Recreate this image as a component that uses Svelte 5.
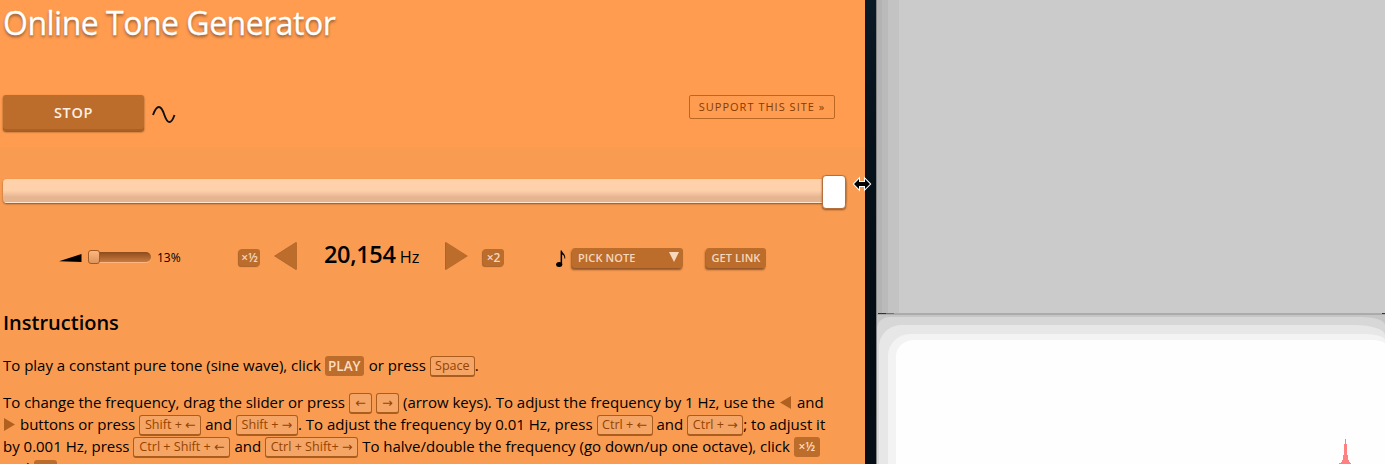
<script>
  const volume = 13;
  const frequency = '20,154';
</script>

<div class="desktop">
  <main>
    <h1>Online Tone Generator</h1>
    <div class="top">
      <button class="stop">STOP</button>
      <svg class="wave" width="24" height="20" viewBox="0 0 24 20"><path d="M1 10C5 -1 9 0 12.2 9.5S19 20 22.5 10" /></svg>
      <a class="support">SUPPORT THIS SITE »</a>
    </div>
    <div class="slider"><span class="thumb"></span></div>
    <div class="controls">
      <svg class="volicon" width="23" height="8"><path d="M0 7.2L22.5 0V8Z" /></svg>
      <div class="volume"><span></span></div>
      <span class="percent">{volume}%</span>
      <button class="mini half">×½</button>
      <svg class="tri left" width="22" height="28"><path d="M0 14L22 0V28Z" /></svg>
      <div class="freq"><b>{frequency}</b> Hz</div>
      <svg class="tri right" width="22" height="28"><path d="M22 14L0 0V28Z" /></svg>
      <button class="mini double">×2</button>
      <svg class="note" width="11" height="18" viewBox="0 0 11 18"><ellipse cx="3.2" cy="14.5" rx="3.1" ry="2.5" /><path d="M4.6 0.5H5.8C6 3 9.8 4 9.2 8.6H8.3C8.6 6.2 7.5 5 6.1 4.6V14.5H4.6Z" /></svg>
      <button class="pick">PICK NOTE<svg width="10" height="10"><path d="M0 0H10L5 10Z" /></svg></button>
      <button class="link">GET LINK</button>
    </div>
    <h2>Instructions</h2>
    <p class="first"><span>To play a constant pure tone (sine wave), click</span><span class="tag play">PLAY</span><span>or press</span><kbd class="space">Space</kbd>.</p>
    <div class="para">
      <p><span>To change the frequency, drag the slider or press</span><kbd style:width="23px" style:margin="0 4px">←</kbd><kbd style:width="23px" style:margin-right="4px">→</kbd><span>(arrow keys). To adjust the frequency by 1 Hz, use the</span><svg class="inline" width="11" height="13"><path d="M0 6.5L11 0V13Z" /></svg><span>and</span></p>
      <p><svg class="inline begin" width="11" height="13"><path d="M11 6.5L0 0V13Z" /></svg><span>buttons or press</span><kbd style:width="62px" style:margin="0 4px">Shift + ←</kbd><span>and</span><kbd style:width="62px" style:margin-left="4px">Shift + →</kbd><span>. To adjust the frequency by 0.01 Hz, press</span><kbd style:width="56px" style:margin="0 4px">Ctrl + ←</kbd><span>and</span><kbd style:width="56px" style:margin-left="4px">Ctrl + →</kbd><span>; to adjust it</span></p>
      <p><span>by 0.001 Hz, press</span><kbd style:width="97px" style:margin="0 4px">Ctrl + Shift + ←</kbd><span>and</span><kbd style:width="93px" style:margin="0 4px">Ctrl + Shift+ →</kbd><span>To halve/double the frequency (go down/up one octave), click</span><span class="tag octave">×½</span></p>
      <p><span>and</span><span class="tag last">×2</span></p>
    </div>
    <svg class="cursor" width="18" height="12" viewBox="0 0 18 12"><path class="halo" d="M1 6L6 1V4H12V1L17 6L12 11V8H6V11Z" /></svg>
  </main>
  <div class="edge"></div>
  <section>
    <div class="gray"></div>
    <div class="rule"></div>
    <div class="white">
      <div class="l1"><div class="l2"><div class="l3"><div class="l4"></div></div></div></div>
      <svg class="peak" width="12" height="25" shape-rendering="crispEdges"><path d="M6 0H7V5H8V16H9V21H10V23H11V24H12V25H0V24H2V23H3V21H4V16H5V5H6Z" /></svg>
    </div>
  </section>
</div>

<style>
  :global(body) { overflow: hidden; }
  * { box-sizing: border-box; }
  .desktop { display: flex; width: 1385px; height: 464px; overflow: hidden; font-family: "Open Sans", sans-serif; color: #000; }
  main { position: relative; z-index: 2; width: 865px; height: 464px; flex: none; background: linear-gradient(#ff9c50 0 147px, #f99c51 147px); padding-left: 3px; }
  h1 { margin: 0; height: 95px; padding-top: 1px; font-size: 32px; line-height: 44px; font-weight: 400; letter-spacing: -.5px; color: #fff; -webkit-text-stroke: .3px #fff; text-shadow: 0 2px 3px #8b5630; }
  button { border: 0; padding: 0; font-family: inherit; color: #f7d7bd; background: #bc6d2b; border-radius: 3px; box-shadow: -1px 2px 2px #935527; }
  .top { display: flex; height: 84px; align-items: flex-start; }
  .stop { width: 141px; height: 36px; padding-bottom: 2px; font-size: 14.5px; font-weight: 600; letter-spacing: .6px; color: #fff0e3; box-shadow: inset 0 -2px #ab6126, 0 1px 2px #7b481f; }
  .wave { margin: 10px 0 0 8px; fill: none; stroke: #111; stroke-width: 1.9; }
  .support { margin-left: 513px; width: 146px; height: 24px; border: 1px solid #ba6821; border-radius: 2px; color: #843b00; font-size: 11px; line-height: 22px; letter-spacing: 1.02px; text-align: center; white-space: nowrap; }
  .slider { display: flex; justify-content: flex-end; width: 843px; height: 24px; border-radius: 4px; background: linear-gradient(#ffd1ab 0 48%, #e5b592 75% 95%, #ffe5cd 96%); box-shadow: 0 1px 2px #85532d; }
  .thumb { width: 24px; height: 34px; margin-top: -4px; border-radius: 4px; background: #fff; border: 1px solid #b66f3b; box-shadow: 0 1px 2px #8c5427; }
  .controls { display: flex; height: 94px; padding-top: 36px; align-items: flex-start; }
  .volicon { margin: 15px 0 0 56px; }
  .volume { width: 63px; height: 10px; margin: 13px 0 0 6px; border-radius: 5px; background: linear-gradient(#8d4c1d, #c97a3e); box-shadow: 0 1px #ffb780; }
  .volume span { display: block; width: 12px; height: 14px; margin-top: -2px; border: 1px solid #a15b25; border-radius: 3px; background: linear-gradient(#ffb67d, #dd965d); }
  .percent { width: 30px; margin: 10px 0 0 6px; font-size: 12px; line-height: 18px; }
  .mini { width: 21px; height: 17px; margin-top: 10px; font-size: 12px; line-height: 17px; font-weight: 600; box-shadow: -1px 1px 1px #a96229; }
  .half { margin-left: 52px; }
  .tri { margin-top: 3px; fill: #bc6d2b; filter: drop-shadow(-1px 0 0 #a96430); }
  .left { margin-left: 15px; }
  .freq { width: 97px; margin: -2px 0 0 27px; font-size: 16.3px; line-height: 34px; white-space: nowrap; }
  .freq b { font-size: 23.5px; font-weight: 600; letter-spacing: -.35px; }
  .right { margin-left: 25px; }
  .double { margin-left: 15px; }
  .note { margin: 11px 0 0 52px; }
  .pick { display: flex; justify-content: space-between; width: 111px; height: 20px; margin: 9px 0 0 5px; padding: 0 4px 0 6px; font-size: 11px; line-height: 20px; font-weight: 600; letter-spacing: .1px; }
  .pick svg { margin-top: 4px; fill: #f7d7bd; }
  .link { width: 60px; height: 20px; margin: 9px 0 0 23px; font-size: 11px; line-height: 20px; font-weight: 600; letter-spacing: .1px; }
  h2 { margin: 12px 0 0; height: 44px; font-size: 20px; line-height: 28px; font-weight: 600; letter-spacing: 0; }
  p { display: flex; margin: 0; align-items: center; height: 22px; font-size: 15px; line-height: 22px; letter-spacing: -.01px; white-space: nowrap; }
  .first { height: 37px; align-items: flex-start; margin-top: 1px; }
  .tag { flex: none; height: 20px; margin-top: 2px; border-radius: 3px; background: #bc6d2b; color: #ffdcc0; font-size: 13.5px; line-height: 20px; font-weight: 600; text-align: center; }
  .play { width: 39px; margin: 2px 5px 0 4px; }
  kbd { display: inline-block; flex: none; height: 21px; margin-top: 3px !important; border: 1px solid #aa5d1d; border-bottom-width: 2px; border-radius: 3px; background: #f5a566; color: #954400; font-family: "Open Sans", "DejaVu Sans", sans-serif; font-size: 12.6px; line-height: 18px; text-align: center; white-space: nowrap; }
  .space { width: 45px; margin: 0 0 0 4px; margin-top: 2px !important; }
  .inline { margin: 0 6px 0 5px; fill: #b26020; }
  .begin { margin: 0 6px 0 1px; margin-right: 5px; }
  .octave { width: 26px; margin-left: 4px; font-size: 12px; }
  .last { width: 23px; margin: 4px 0 0 4px; }
  .cursor { position: absolute; left: 853px; top: 178px; fill: #000; overflow: visible; }
  .halo { stroke: #fff; stroke-width: 2; paint-order: stroke; }
  .edge { flex: none; width: 11px; background: linear-gradient(#0a1a26, #06121c 120px, #040c14 330px, #060f17); }
  section { flex: 1; height: 464px; border-left: 1px solid #858585; }
  .gray { height: 313px; background: linear-gradient(90deg, #b3b3b3 0 5px, #bababa 5px 11px, #c3c3c3 11px 22px, #cbcbcb 22px); }
  .rule { height: 1px; background: linear-gradient(90deg, #b3b3b3 0 1px, #2d1cb5 1px 9px, #6f66b8 9px 17px, #aaa5ca 17px 505px, #2d1cb5 505px); }
  .white { position: relative; height: 150px; border-top: 1px solid #aaa; background: #c6c6c6; padding-top: 2px; }
  .l1 { height: 147px; padding: 8px 0 0 2px; background: #d7d7d7; border-radius: 12px 24px 0 0 / 12px 8px 0 0; }
  .l2 { height: 139px; padding: 9px 0 0 9px; background: #e7e7e7; border-radius: 22px 30px 0 0 / 22px 10px 0 0; }
  .l3 { height: 130px; padding: 6px 0 0 8px; background: #f3f3f3; border-radius: 22px 20px 0 0 / 22px 6px 0 0; }
  .l4 { height: 124px; background: #fefefe; border-radius: 18px 14px 0 0 / 16px 4px 0 0; }
  .peak { position: absolute; left: 462px; bottom: 0; fill: #ff8080; }
</style>
